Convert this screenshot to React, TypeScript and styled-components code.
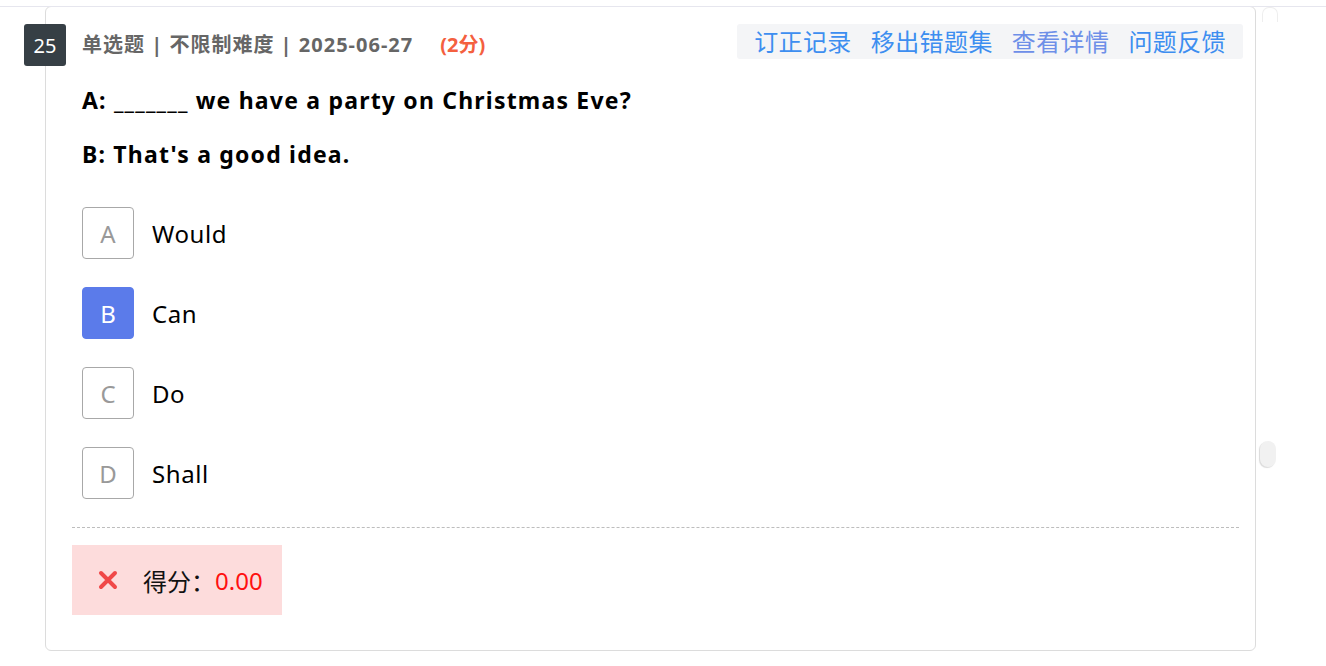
import * as React from 'react';
import styled, { createGlobalStyle } from 'styled-components';

const GlobalStyle = createGlobalStyle`
  html, body {
    margin: 0;
    padding: 0;
    background: #fff;
    font-family: "Noto Sans", "Noto Sans CJK SC", sans-serif;
  }
`;

const Page = styled.div`
  position: relative;
  margin-top: 6px;
  border-top: 1px solid #e6e6ee;
  height: 659px;
  overflow: hidden;
`;

const Card = styled.div`
  margin-left: 45px;
  width: 1209px;
  margin-top: -1px;
  border: 1px solid #dcdcdc;
  border-radius: 6px;
  padding-bottom: 35px;
`;

const Header = styled.div`
  display: flex;
  align-items: flex-start;
  padding: 17px 12px 0 0;
`;

const NumBadge = styled.div`
  width: 42px;
  height: 42px;
  margin-left: -22px;
  border-radius: 3px;
  background: #363f45;
  color: #fff;
  font-size: 20px;
  display: flex;
  align-items: center;
  justify-content: center;
`;

const Meta = styled.div`
  margin-left: 16px;
  line-height: 42px;
  font-size: 20px;
  letter-spacing: 1px;
  font-weight: 700;
  color: #666;
  flex: 1;
`;

const Score = styled.span`
  margin-left: 27px;
  color: #f4603f;
  letter-spacing: 0;
`;

const Actions = styled.div`
  display: flex;
  gap: 19px;
  padding: 0 17px;
  height: 35px;
  background: #f4f5f7;
  border-radius: 3px;
`;

const ActionLink = styled.span<{ $muted?: boolean }>`
  font-size: 24px;
  line-height: 35px;
  letter-spacing: 0.4px;
  color: ${p => (p.$muted ? '#6d8fe8' : '#3d8ef0')};
  cursor: pointer;
`;

const Body = styled.div`
  padding-left: 36px;
`;

const Dialogue = styled.div`
  margin-top: 18px;
`;

const Line = styled.p`
  margin: 0;
  font-size: 23px;
  letter-spacing: 1.2px;
  font-weight: 700;
  line-height: 32px;
  color: #000;
  & + & {
    margin-top: 22px;
  }
`;

const Options = styled.div`
  display: flex;
  flex-direction: column;
  gap: 28px;
  margin-top: 37px;
`;

const OptionRow = styled.div`
  display: flex;
  align-items: center;
  gap: 18px;
`;

const OptionKey = styled.div<{ $picked?: boolean }>`
  width: 52px;
  height: 52px;
  box-sizing: border-box;
  border-radius: 4px;
  border: 1px solid ${p => (p.$picked ? '#5b7bea' : '#a8a8a8')};
  background: ${p => (p.$picked ? '#5b7bea' : '#fff')};
  color: ${p => (p.$picked ? '#fff' : '#999')};
  font-size: 24px;
  display: flex;
  align-items: center;
  justify-content: center;
`;

const OptionText = styled.span`
  font-size: 24px;
  letter-spacing: 0.6px;
  color: #000;
`;

const Divider = styled.div`
  margin: 28px 16px 0 26px;
  border-top: 1px dashed #bdbdbd;
`;

const Result = styled.div`
  margin: 17px 0 0 26px;
  width: 210px;
  height: 70px;
  box-sizing: border-box;
  padding-left: 25px;
  background: #fddcdc;
  display: flex;
  align-items: center;
  font-size: 24px;
  color: #111;
`;

const ResultValue = styled.span`
  color: #ff1010;
`;

const CrossIcon = styled.svg`
  width: 22px;
  height: 22px;
  margin-right: 24px;
`;

const ScrollThumb = styled.div`
  position: absolute;
  left: 1260px;
  top: 434px;
  width: 16px;
  height: 26px;
  border-radius: 8px;
  background: #f1f1f1;
  box-shadow: -1px 1px 1px #dadada;
`;

const SideEdge = styled.div`
  position: absolute;
  left: 1262px;
  top: 0;
  width: 14px;
  height: 14px;
  border-radius: 7px 7px 0 0;
  border: 1px solid #eeeeee;
  border-bottom: none;
`;

const options = [
  { key: 'A', text: 'Would' },
  { key: 'B', text: 'Can', picked: true },
  { key: 'C', text: 'Do' },
  { key: 'D', text: 'Shall' },
];

export default function App() {
  return (
    <>
      <GlobalStyle />
      <Page>
        <Card>
          <Header>
            <NumBadge>25</NumBadge>
            <Meta>
              单选题 | 不限制难度 | 2025-06-27
              <Score>(2分)</Score>
            </Meta>
            <Actions>
              <ActionLink>订正记录</ActionLink>
              <ActionLink>移出错题集</ActionLink>
              <ActionLink $muted>查看详情</ActionLink>
              <ActionLink>问题反馈</ActionLink>
            </Actions>
          </Header>
          <Body>
            <Dialogue>
              <Line>A: _______ we have a party on Christmas Eve?</Line>
              <Line>B: That's a good idea.</Line>
            </Dialogue>
            <Options>
              {options.map(o => (
                <OptionRow key={o.key}>
                  <OptionKey $picked={o.picked}>{o.key}</OptionKey>
                  <OptionText>{o.text}</OptionText>
                </OptionRow>
              ))}
            </Options>
          </Body>
          <Divider />
          <Result>
            <CrossIcon viewBox="0 0 22 22">
              <path d="M4 4 L18 18 M18 4 L4 18" stroke="#f04848" strokeWidth="4" strokeLinecap="round" />
            </CrossIcon>
            得分：<ResultValue>0.00</ResultValue>
          </Result>
        </Card>
        <SideEdge />
        <ScrollThumb />
      </Page>
    </>
  );
}
